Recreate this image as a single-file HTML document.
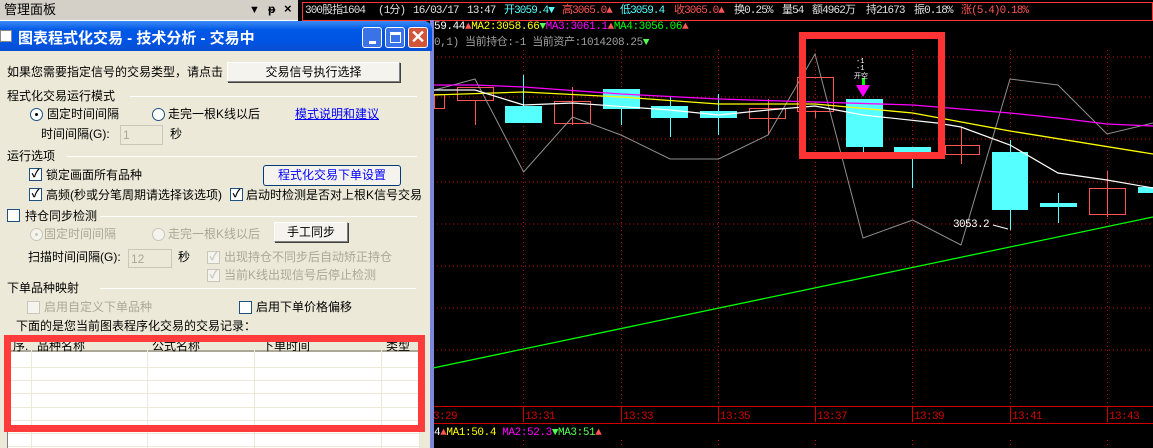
<!DOCTYPE html>
<html><head><meta charset="utf-8"><style>
*{margin:0;padding:0;box-sizing:border-box}
body{width:1153px;height:448px;overflow:hidden;background:#000;position:relative;font-family:"Liberation Sans","Noto Sans CJK SC",sans-serif}
.a{position:absolute;white-space:nowrap}
.t{font-size:12px;line-height:14px;color:#000}
.g{color:#aca899}
.ct{font-family:"Liberation Mono","Noto Sans CJK SC",monospace;font-size:11px;letter-spacing:-0.9px;line-height:14px}
.c2{font-family:"Liberation Mono","Noto Sans CJK SC",monospace;font-size:11px;letter-spacing:-0.4px;line-height:14px}
.btn{position:absolute;background:#f4f3ee;border:1px solid #7f7f7f;border-top-color:#fff;border-left-color:#fff;box-shadow:1px 1px 0 #404040;font-size:12px;text-align:center;line-height:18px}
.cb{position:absolute;width:13px;height:13px;border:1px solid #1c5180;background:#fff;font-size:11px;line-height:11px;text-align:center;font-weight:bold}
.cbd{border-color:#c9c7ba;color:#c9c7ba;background:#f4f3ee}
.rd{position:absolute;width:13px;height:13px;border-radius:50%;border:1px solid #1c5180;background:#fff}
.rdd{border-color:#c9c7ba;background:#f4f3ee}
.dot{position:absolute;left:4px;top:4px;width:3px;height:3px;border-radius:50%;background:#000}
.ln{position:absolute;height:1px;background:#c5c2b2;border-bottom:1px solid #fff}
.inp{position:absolute;border:1px solid #c9c7ba;background:#ece9d8;font-size:12px;color:#aca899;padding-left:2px;line-height:18px}
</style></head><body>
<svg class="a" style="left:0;top:0" width="1153" height="448">
<rect x="0" y="0" width="1153" height="448" fill="#000"/>
<rect x="302.5" y="2.5" width="850" height="18" fill="none" stroke="#ff3333"/>
<g stroke="#c00000" stroke-dasharray="1,3">
<line x1="433" y1="57" x2="1153" y2="57"/><line x1="433" y1="97" x2="1153" y2="97"/><line x1="433" y1="139" x2="1153" y2="139"/><line x1="433" y1="182" x2="1153" y2="182"/><line x1="433" y1="224" x2="1153" y2="224"/><line x1="433" y1="266" x2="1153" y2="266"/><line x1="433" y1="308" x2="1153" y2="308"/><line x1="433" y1="350" x2="1153" y2="350"/>
<line x1="523.5" y1="50" x2="523.5" y2="406"/><line x1="621.5" y1="50" x2="621.5" y2="406"/><line x1="718.5" y1="50" x2="718.5" y2="406"/><line x1="815.5" y1="50" x2="815.5" y2="406"/><line x1="912.5" y1="50" x2="912.5" y2="406"/><line x1="1010.5" y1="50" x2="1010.5" y2="406"/><line x1="1107.5" y1="50" x2="1107.5" y2="406"/>
<line x1="523.5" y1="440" x2="523.5" y2="448"/><line x1="621.5" y1="440" x2="621.5" y2="448"/><line x1="718.5" y1="440" x2="718.5" y2="448"/><line x1="815.5" y1="440" x2="815.5" y2="448"/><line x1="912.5" y1="440" x2="912.5" y2="448"/><line x1="1010.5" y1="440" x2="1010.5" y2="448"/><line x1="1107.5" y1="440" x2="1107.5" y2="448"/>
</g>
<line x1="433" y1="406.5" x2="1153" y2="406.5" stroke="#d00000"/>
<line x1="433" y1="423.5" x2="1153" y2="423.5" stroke="#d00000"/>
<g stroke="#d00000"><line x1="523.5" y1="406" x2="523.5" y2="422"/><line x1="621.5" y1="406" x2="621.5" y2="422"/><line x1="718.5" y1="406" x2="718.5" y2="422"/><line x1="815.5" y1="406" x2="815.5" y2="422"/><line x1="912.5" y1="406" x2="912.5" y2="422"/><line x1="1010.5" y1="406" x2="1010.5" y2="422"/><line x1="1107.5" y1="406" x2="1107.5" y2="422"/></g>
<g fill="#d00000" font-family="Liberation Mono,monospace" font-size="11" letter-spacing="-0.6"><text x="433" y="419">3:29</text><text x="525" y="419">13:31</text><text x="623" y="419">13:33</text><text x="720" y="419">13:35</text><text x="817" y="419">13:37</text><text x="914" y="419">13:39</text><text x="1012" y="419">13:41</text><text x="1109" y="419">13:43</text></g>
<g stroke-width="1">
<line x1="475.5" y1="100" x2="475.5" y2="125" stroke="#ff5555"/>
<line x1="523.5" y1="75" x2="523.5" y2="106" stroke="#55ffff"/>
<line x1="572.5" y1="87" x2="572.5" y2="125" stroke="#ff5555"/>
<line x1="621.5" y1="89" x2="621.5" y2="125" stroke="#55ffff"/>
<line x1="670.5" y1="97" x2="670.5" y2="137" stroke="#55ffff"/>
<line x1="718.5" y1="94" x2="718.5" y2="135" stroke="#55ffff"/>
<line x1="768.5" y1="99" x2="768.5" y2="135" stroke="#ff5555"/>
<line x1="815.5" y1="111" x2="815.5" y2="118" stroke="#ff5555"/>
<line x1="863.5" y1="147" x2="863.5" y2="152" stroke="#55ffff"/>
<line x1="912.5" y1="152" x2="912.5" y2="188" stroke="#55ffff"/>
<line x1="961.5" y1="127" x2="961.5" y2="164" stroke="#ff5555"/>
<line x1="1010.5" y1="140" x2="1010.5" y2="230" stroke="#55ffff"/>
<line x1="1058.5" y1="193" x2="1058.5" y2="223" stroke="#55ffff"/>
<line x1="1107.5" y1="171" x2="1107.5" y2="217" stroke="#ff5555"/>
</g>
<g fill="#55ffff">
<rect x="505" y="106" width="37" height="17"/><rect x="603" y="89" width="37" height="20"/><rect x="651" y="106" width="37" height="12"/><rect x="700" y="111" width="37" height="7"/><rect x="846" y="99" width="37" height="48"/><rect x="894" y="147" width="37" height="5"/><rect x="992" y="152" width="36" height="58"/><rect x="1040" y="203" width="37" height="4"/><rect x="1138" y="187" width="15" height="6"/>
</g>
<g fill="none" stroke="#ff5555">
<rect x="434.5" y="94.5" width="10" height="14"/><rect x="457.5" y="87.5" width="36" height="13"/><rect x="554.5" y="101.5" width="36" height="22"/><rect x="749.5" y="108.5" width="36" height="10"/><rect x="797.5" y="77.5" width="36" height="34"/><rect x="945.5" y="145.5" width="34" height="9"/><rect x="1089.5" y="188.5" width="36" height="26"/>
</g>
<polyline fill="none" stroke="#909090" points="434.6,90 475,79 523.6,172 572.5,117 621,135 670,159 718.6,159 768,135 815,54 863,238 912.7,220 961,245 1010,79 1058,85 1107,134 1153,123"/>
<polyline fill="none" stroke="#ff00ff" stroke-width="1.3" points="433,85 475,85 523.6,87 621,94 718.6,99 815,102 912.7,105 1010,113 1058,118 1107,124 1153,126"/>
<polyline fill="none" stroke="#ffff00" stroke-width="1.3" points="433,95 523.6,92 621,97 718.6,104 815,104 912.7,113 1010,131 1153,154"/>
<polyline fill="none" stroke="#ffffff" stroke-width="1.2" points="433,90 475,90 523.6,105 572.5,103 670,110 718.6,115 768,110 815,106 863,115 937,123 961,127 1010,145 1058,173 1107,180 1153,188"/>
<line x1="433" y1="368" x2="1153" y2="217" stroke="#00ff00" stroke-width="1.3"/>
<text x="953" y="227" fill="#fff" font-family="Liberation Mono,monospace" font-size="11" letter-spacing="-0.6">3053.2</text>
<line x1="993" y1="225" x2="1008" y2="229" stroke="#fff"/>
<rect x="862" y="78" width="3" height="8" fill="#00ff00"/>
<polygon points="856,85 870,85 863,97" fill="#ff00ff"/>
<g fill="#fff" font-family="Liberation Mono,'Noto Sans CJK SC',monospace" font-size="7"><text x="856" y="63">-1</text><text x="856" y="70">-1</text><text x="854" y="78">开空</text></g>
<rect x="802.5" y="35.5" width="139" height="120" fill="none" stroke="#ff3333" stroke-width="7"/>
<rect x="430" y="20" width="4" height="428" fill="#7b86d8"/>
</svg>
<div class="a ct" style="left:305px;top:4px;color:#e0e0e0">300股指1604</div>
<div class="a ct" style="left:378px;top:4px;color:#e0e0e0">(1分)</div>
<div class="a ct" style="left:413px;top:4px;color:#e0e0e0">16/03/17</div>
<div class="a ct" style="left:467px;top:4px;color:#e0e0e0">13:47</div>
<div class="a ct" style="left:504px;top:4px;color:#55ffff">开3059.4▼</div>
<div class="a ct" style="left:562px;top:4px;color:#ff5555">高3065.0▲</div>
<div class="a ct" style="left:620px;top:4px;color:#55ffff">低3059.4</div>
<div class="a ct" style="left:674px;top:4px;color:#ff5555">收3065.0▲</div>
<div class="a ct" style="left:734px;top:4px;color:#e0e0e0">换0.25%</div>
<div class="a ct" style="left:782px;top:4px;color:#e0e0e0">量54</div>
<div class="a ct" style="left:812px;top:4px;color:#e0e0e0">额4962万</div>
<div class="a ct" style="left:866px;top:4px;color:#e0e0e0">持21673</div>
<div class="a ct" style="left:914px;top:4px;color:#e0e0e0">振0.18%</div>
<div class="a ct" style="left:961px;top:4px;color:#ff5555">涨(5.4)0.18%</div>
<div class="a c2" style="left:434px;top:20px;color:#fff">59.44<span style="color:#ff5555">▲</span><span style="color:#ffff00">MA2:3058.66</span><span style="color:#55ff55">▼</span><span style="color:#ff00ff">MA3:3061.1</span><span style="color:#ff5555">▲</span><span style="color:#00ff00">MA4:3056.06</span><span style="color:#ff5555">▲</span></div>
<div class="a c2" style="left:434px;top:36px;color:#a0a0a0">0,1) 当前持仓:-1 当前资产:1014208.25<span style="color:#55ff55">▼</span></div>
<div class="a c2" style="left:434px;top:426px;color:#fff">4<span style="color:#ff5555">▲</span><span style="color:#ffff00">MA1:50.4 </span><span style="color:#ff00ff">MA2:52.3</span><span style="color:#55ff55">▼MA3:51</span><span style="color:#ff5555">▲</span></div>
<div class="a" style="left:0;top:0;width:298px;height:21px;background:#d4d0c8;border-bottom:1px solid #fff"></div>
<div class="a t" style="left:4px;top:3px;font-size:13px">管理面板</div>
<div class="a t" style="left:249px;top:3px;font-size:11px">▼</div>
<div class="a t" style="left:268px;top:2px;font-size:12px;font-weight:bold">ᵽ</div>
<div class="a t" style="left:284px;top:2px;font-size:13px;font-weight:bold">×</div>
<div class="a" style="left:0;top:21px;width:432px;height:30px;border-radius:0 8px 0 0;background:linear-gradient(#3d8bf5,#0058e6 30%,#0054e3 70%,#0a4fd0)"></div>
<div class="a" style="left:0;top:30px;width:12px;height:12px;background:#fff;border:1px solid #888"></div>
<div class="a" style="left:18px;top:27px;color:#fff;font-weight:bold;font-size:15px;font-family:'Liberation Sans','Noto Sans CJK SC',sans-serif">图表程式化交易 - 技术分析 - 交易中</div>
<div class="a" style="left:362px;top:27px;width:20px;height:21px;border:1px solid #fff;border-radius:3px;background:#3a72e8"><div class="a" style="left:6px;top:13px;width:7px;height:3px;background:#fff"></div></div>
<div class="a" style="left:385px;top:27px;width:20px;height:21px;border:1px solid #fff;border-radius:3px;background:#3a72e8"><div class="a" style="left:4px;top:4px;width:11px;height:11px;border:1px solid #fff;border-top-width:3px"></div></div>
<div class="a" style="left:408px;top:27px;width:20px;height:21px;border:1px solid #fff;border-radius:3px;background:#d2553a;color:#fff;font-size:18px;line-height:18px;text-align:center;font-weight:bold">✕</div>
<div class="a" style="left:0;top:51px;width:430px;height:397px;background:#ece9d8"></div>
<div class="a t" style="left:7px;top:65px">如果您需要指定信号的交易类型，请点击</div>
<div class="btn" style="left:227px;top:62px;width:173px;height:20px">交易信号执行选择</div>
<div class="a t" style="left:7px;top:89px">程式化交易运行模式</div><div class="ln" style="left:130px;top:96px;width:287px"></div>
<div class="rd" style="left:30px;top:108px"><div class="dot"></div></div><div class="a t" style="left:47px;top:107px">固定时间间隔</div>
<div class="rd" style="left:152px;top:108px"></div><div class="a t" style="left:168px;top:107px">走完一根K线以后</div>
<div class="a t" style="left:295px;top:107px;color:#0000ff;text-decoration:underline">模式说明和建议</div>
<div class="a t" style="left:41px;top:127px">时间间隔(G):</div>
<div class="inp" style="left:120px;top:125px;width:43px;height:20px">1</div>
<div class="a t" style="left:170px;top:127px">秒</div>
<div class="a t" style="left:7px;top:149px">运行选项</div><div class="ln" style="left:67px;top:156px;width:350px"></div>
<div class="cb" style="left:29px;top:168px">✓</div><div class="a t" style="left:46px;top:168px">锁定画面所有品种</div>
<div class="btn" style="left:263px;top:165px;width:138px;height:21px;border:1px solid #003c74;border-radius:3px;box-shadow:none;color:#0000ff">程式化交易下单设置</div>
<div class="cb" style="left:29px;top:188px">✓</div><div class="a t" style="left:46px;top:188px">高频(秒或分笔周期请选择该选项)</div>
<div class="cb" style="left:230px;top:188px">✓</div><div class="a t" style="left:246px;top:188px">启动时检测是否对上根K信号交易</div>
<div class="cb" style="left:7px;top:209px"></div><div class="a t" style="left:25px;top:209px">持仓同步检测</div><div class="ln" style="left:100px;top:216px;width:317px"></div>
<div class="rd rdd" style="left:30px;top:228px"><div class="dot" style="background:#c9c7ba"></div></div><div class="a t g" style="left:44px;top:227px">固定时间间隔</div>
<div class="rd rdd" style="left:152px;top:228px"></div><div class="a t g" style="left:168px;top:227px">走完一根K线以后</div>
<div class="btn" style="left:274px;top:222px;width:74px;height:20px">手工同步</div>
<div class="a t" style="left:28px;top:250px">扫描时间间隔(G):</div>
<div class="inp" style="left:128px;top:249px;width:44px;height:19px">12</div>
<div class="a t" style="left:178px;top:250px">秒</div>
<div class="cb cbd" style="left:207px;top:251px">✓</div><div class="a t g" style="left:224px;top:250px">出现持仓不同步后自动矫正持仓</div>
<div class="cb cbd" style="left:207px;top:269px">✓</div><div class="a t g" style="left:224px;top:268px">当前K线出现信号后停止检测</div>
<div class="a t" style="left:7px;top:281px">下单品种映射</div><div class="ln" style="left:100px;top:288px;width:316px"></div>
<div class="cb cbd" style="left:27px;top:301px"></div><div class="a t g" style="left:44px;top:300px">启用自定义下单品种</div>
<div class="cb" style="left:239px;top:301px"></div><div class="a t" style="left:256px;top:300px">启用下单价格偏移</div>
<div class="a t" style="left:16px;top:319px">下面的是您当前图表程序化交易的交易记录：</div>
<div class="a" style="left:7px;top:338px;width:412px;height:110px;background:#fff;border-left:1px solid #808080"></div>
<div class="a" style="left:8px;top:338px;width:411px;height:14px;background:#ece9d8;border-bottom:2px solid #aca899"></div>
<div class="a t" style="left:13px;top:339px">序.</div><div class="a t" style="left:37px;top:339px">品种名称</div><div class="a t" style="left:152px;top:339px">公式名称</div><div class="a t" style="left:262px;top:339px">下单时间</div><div class="a t" style="left:386px;top:339px">类型</div>
<svg class="a" style="left:0;top:338px" width="430" height="110"><g stroke="#ece9d8"><line x1="31.5" y1="0" x2="31.5" y2="110"/><line x1="147.5" y1="0" x2="147.5" y2="110"/><line x1="254.5" y1="0" x2="254.5" y2="110"/><line x1="381.5" y1="0" x2="381.5" y2="110"/>
<line x1="8" y1="29.5" x2="419" y2="29.5"/><line x1="8" y1="42.5" x2="419" y2="42.5"/><line x1="8" y1="55.5" x2="419" y2="55.5"/><line x1="8" y1="69.5" x2="419" y2="69.5"/><line x1="8" y1="82.5" x2="419" y2="82.5"/><line x1="8" y1="95.5" x2="419" y2="95.5"/><line x1="8" y1="108.5" x2="419" y2="108.5"/></g></svg>
<div class="a" style="left:4px;top:335px;width:421px;height:97px;border:7px solid #ff3b3b"></div>
</body></html>
